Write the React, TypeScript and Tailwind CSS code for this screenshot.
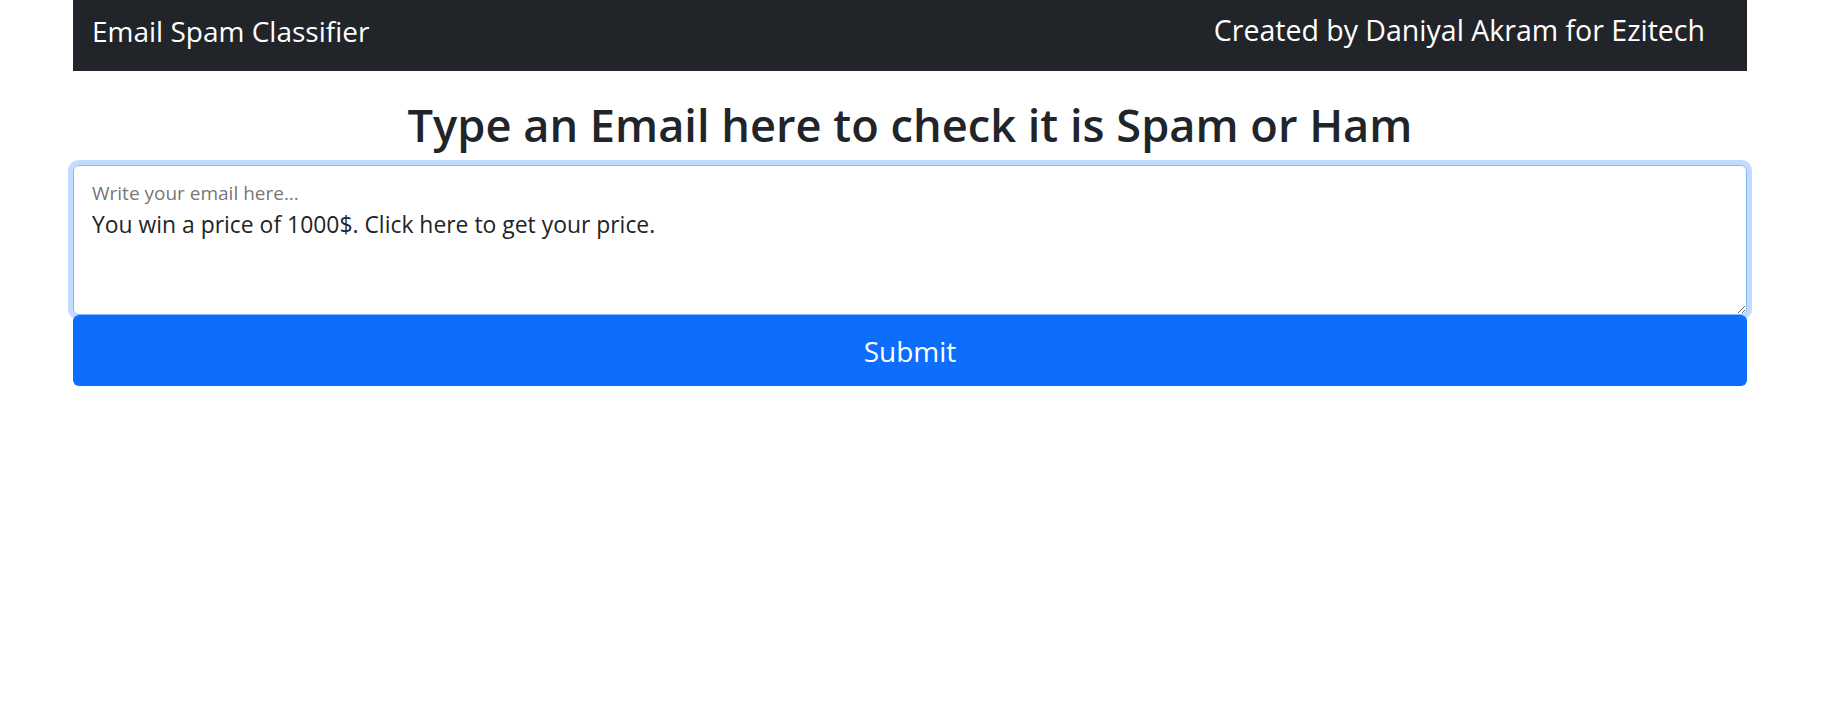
const App = () => {
  return (
    <div className="min-h-screen w-full bg-white font-['Open_Sans',sans-serif] text-[#212529]">
      <div className="ml-[73px] w-[1674px]">
        {/* Top navbar */}
        <nav className="flex h-[71px] items-center justify-between bg-[#212529] pb-[10px] pl-[19px] pr-[42px] text-white">
          <span className="text-[28px] leading-none">Email Spam Classifier</span>
          <span className="text-[28.5px] leading-none">Created by Daniyal Akram for Ezitech</span>
        </nav>

        <h2 className="mt-[27px] text-center text-[45.2px] font-semibold leading-[1.2]">
          Type an Email here to check it is Spam or Ham
        </h2>

        {/* Email form */}
        <form className="mt-[13px] flex flex-col" onSubmit={(e) => e.preventDefault()}>
          <div className="relative">
            <textarea
              className="block h-[150px] w-full rounded-[6px] border border-[#86b7fe] px-[18px] pt-[42px] text-[22.9px] leading-[1.5] text-[#212529] shadow-[0_0_0_5px_#c2dbfe] outline-none"
              defaultValue="You win a price of 1000$. Click here to get your price."
            />
            <label className="pointer-events-none absolute left-[19px] top-[19px] text-[19px] leading-none text-[#212529]/65">
              Write your email here...
            </label>
          </div>
          <button
            type="submit"
            className="relative flex h-[71px] w-full items-center justify-center rounded-[6px] bg-[#0d6efd] text-[28px] text-white"
          >
            Submit
          </button>
        </form>
      </div>
    </div>
  );
};

export default App;
